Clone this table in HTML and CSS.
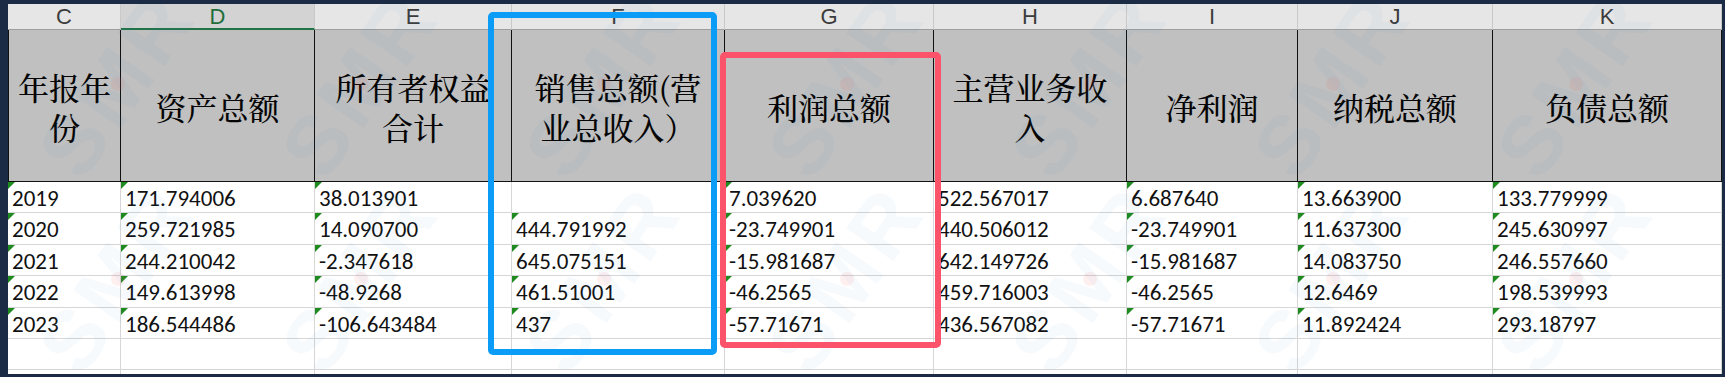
FILE: index.html
```html
<!DOCTYPE html>
<html lang="zh-CN">
<head>
<meta charset="utf-8">
<title>年报数据</title>
<link rel="stylesheet" href="styles.css">
</head>
<body>
<div class="frame">
  <div class="sheet">
    <div class="grid letters">
      <div class="lc">C</div>
      <div class="lc sel">D</div>
      <div class="lc">E</div>
      <div class="lc">F</div>
      <div class="lc">G</div>
      <div class="lc">H</div>
      <div class="lc">I</div>
      <div class="lc">J</div>
      <div class="lc">K</div>
    </div>
    <div class="grid head">
      <div class="hc"><span>年报年<br>份</span></div>
      <div class="hc"><span>资产总额</span></div>
      <div class="hc"><span>所有者权益<br>合计</span></div>
      <div class="hc"><span>销售总额(营<br>业总收入）</span></div>
      <div class="hc"><span>利润总额</span></div>
      <div class="hc"><span>主营业务收<br>入</span></div>
      <div class="hc"><span>净利润</span></div>
      <div class="hc"><span>纳税总额</span></div>
      <div class="hc"><span>负债总额</span></div>
    </div>
    <div class="grid body">
      <div class="dc t">2019</div><div class="dc t">171.794006</div><div class="dc t">38.013901</div><div class="dc"></div><div class="dc t">7.039620</div><div class="dc">522.567017</div><div class="dc t">6.687640</div><div class="dc t">13.663900</div><div class="dc t">133.779999</div>
      <div class="dc t">2020</div><div class="dc t">259.721985</div><div class="dc t">14.090700</div><div class="dc t">444.791992</div><div class="dc t">-23.749901</div><div class="dc">440.506012</div><div class="dc t">-23.749901</div><div class="dc t">11.637300</div><div class="dc t">245.630997</div>
      <div class="dc t">2021</div><div class="dc t">244.210042</div><div class="dc t">-2.347618</div><div class="dc t">645.075151</div><div class="dc t">-15.981687</div><div class="dc">642.149726</div><div class="dc t">-15.981687</div><div class="dc t">14.083750</div><div class="dc t">246.557660</div>
      <div class="dc t">2022</div><div class="dc t">149.613998</div><div class="dc t">-48.9268</div><div class="dc t">461.51001</div><div class="dc t">-46.2565</div><div class="dc">459.716003</div><div class="dc t">-46.2565</div><div class="dc t">12.6469</div><div class="dc t">198.539993</div>
      <div class="dc t">2023</div><div class="dc t">186.544486</div><div class="dc t">-106.643484</div><div class="dc t">437</div><div class="dc t">-57.71671</div><div class="dc">436.567082</div><div class="dc t">-57.71671</div><div class="dc t">11.892424</div><div class="dc t">293.18797</div>
      <div class="dc"></div><div class="dc"></div><div class="dc"></div><div class="dc"></div><div class="dc"></div><div class="dc"></div><div class="dc"></div><div class="dc"></div><div class="dc"></div>
      <div class="dc"></div><div class="dc"></div><div class="dc"></div><div class="dc"></div><div class="dc"></div><div class="dc"></div><div class="dc"></div><div class="dc"></div><div class="dc"></div>
    </div>

    <div class="watermarks" aria-hidden="true">
      <div class="wm"><span class="wm-text">SMR</span><span class="wm-dot"></span></div>
      <div class="wm"><span class="wm-text">SMR</span><span class="wm-dot"></span></div>
      <div class="wm"><span class="wm-text">SMR</span><span class="wm-dot"></span></div>
      <div class="wm"><span class="wm-text">SMR</span><span class="wm-dot"></span></div>
      <div class="wm"><span class="wm-text">SMR</span><span class="wm-dot"></span></div>
      <div class="wm"><span class="wm-text">SMR</span><span class="wm-dot"></span></div>
      <div class="wm"><span class="wm-text">SMR</span><span class="wm-dot"></span></div>
      <div class="wm"><span class="wm-text">SMR</span><span class="wm-dot"></span></div>
      <div class="wm"><span class="wm-text">SMR</span><span class="wm-dot"></span></div>
      <div class="wm"><span class="wm-text">SMR</span><span class="wm-dot"></span></div>
      <div class="wm"><span class="wm-text">SMR</span><span class="wm-dot"></span></div>
      <div class="wm"><span class="wm-text">SMR</span><span class="wm-dot"></span></div>
      <div class="wm"><span class="wm-text">SMR</span><span class="wm-dot"></span></div>
      <div class="wm"><span class="wm-text">SMR</span><span class="wm-dot"></span></div>
      <div class="wm"><span class="wm-text">SMR</span><span class="wm-dot"></span></div>
      <div class="wm"><span class="wm-text">SMR</span><span class="wm-dot"></span></div>
    </div>

    <div class="mark mark-blue"></div>
    <div class="mark mark-red"></div>
  </div>
</div>
</body>
</html>
```

FILE: styles.css
```css
* { box-sizing: border-box; }

html, body {
  margin: 0;
  padding: 0;
}

body {
  background: #1b2a45;
  width: 1725px;
  height: 377px;
  overflow: hidden;
}

.frame {
  padding: 4px 3px 3px 8px;
  width: 1725px;
  height: 377px;
}

.sheet {
  position: relative;
  width: 1714px;
  height: 370px;
  background: #ffffff;
  overflow: hidden;
}

.grid {
  display: grid;
  grid-template-columns: 113px 194px 197px 213px 209px 193px 171px 195px 229px;
}

/* column letter row */
.lc {
  height: 26px;
  background: #e6e6e6;
  border-right: 1px solid #c9c9c9;
  border-bottom: 1px solid #9e9e9e;
  text-align: center;
  font-family: "Liberation Sans", "DejaVu Sans", sans-serif;
  font-size: 22px;
  line-height: 26px;
  color: #3c3c3c;
}

.lc.sel {
  background: #d3d3d3;
  color: #1f6e3c;
  border-bottom: 2px solid #217346;
  line-height: 25px;
}

/* header cells */
.hc {
  height: 152px;
  background: #c0c0c0;
  border-right: 1px solid #111111;
  border-bottom: 1px solid #111111;
  display: flex;
  align-items: center;
  justify-content: center;
  text-align: center;
  font-family: "Noto Serif CJK SC", "Noto Sans CJK SC", serif;
  font-weight: 500;
  font-size: 31px;
  line-height: 40px;
  color: #050505;
  padding-top: 2px;
}

.hc:first-child {
  border-left: 1px solid #111111;
}

/* data cells */
.body {
  grid-template-rows: 31px 32px 31px 32px 31px 31px 31px;
}

.dc {
  position: relative;
  border-right: 1px solid #d6d6d6;
  border-bottom: 1px solid #d6d6d6;
  padding: 2px 0 0 4px;
  font-family: Calibri, Carlito, "Liberation Sans", Arial, sans-serif;
  font-size: 23px;
  line-height: 28px;
  color: #111111;
  white-space: nowrap;
  overflow: hidden;
}

.dc.t::before {
  content: "";
  position: absolute;
  left: 0;
  top: 0;
  width: 0;
  height: 0;
  border-top: 7px solid #1f8a1f;
  border-right: 7px solid transparent;
}

/* highlight boxes drawn over the sheet */
.mark {
  position: absolute;
  border-width: 6px;
  border-style: solid;
  border-radius: 5px;
  pointer-events: none;
}

.mark-blue {
  border-color: #0a9cf6;
  left: 480px;
  top: 8px;
  width: 229px;
  height: 343px;
}

.mark-red {
  border-color: #fb536a;
  left: 712px;
  top: 48px;
  width: 221px;
  height: 296px;
}

/* faint diagonal watermark logos */
.watermarks {
  position: absolute;
  left: 0;
  top: 0;
  display: grid;
  grid-template-columns: repeat(8, 243px);
  grid-auto-rows: 195px;
  transform: translate(-12px, -18px);
  pointer-events: none;
}

.wm {
  position: relative;
  display: flex;
  align-items: center;
  justify-content: center;
}

.wm-text {
  display: block;
  transform: rotate(-55deg);
  font-family: "Liberation Sans", sans-serif;
  font-weight: bold;
  font-size: 84px;
  letter-spacing: 6px;
  color: rgba(40, 130, 215, 0.045);
}

.wm-dot {
  position: absolute;
  left: 115px;
  top: 91px;
  width: 14px;
  height: 14px;
  border-radius: 50%;
  background: rgba(255, 90, 90, 0.09);
}
```
